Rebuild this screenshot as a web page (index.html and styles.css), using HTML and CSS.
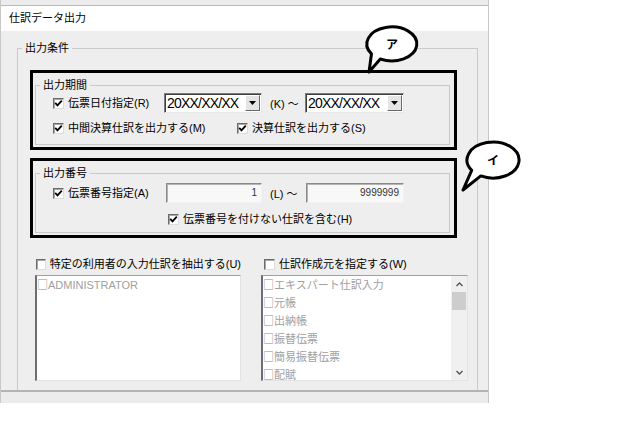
FILE: index.html
```html
<!DOCTYPE html>
<html lang="ja">

<head>
  <meta charset="UTF-8">
  <title>仕訳データ出力</title>
  <link rel="stylesheet" href="styles.css">
</head>

<body>
  <div class="window">
    <div class="frame-top"></div>
    <div class="titlebar">仕訳データ出力</div>

    <div class="client">
      <fieldset class="group outer">
        <legend>出力条件</legend>

        <!-- ア: 出力期間 -->
        <div class="mark">
          <fieldset class="group inner">
            <legend>出力期間</legend>
            <div class="row row-date">
              <label class="check cell-date">
                <span class="box"><svg width="9" height="9" viewBox="0 0 9 9"><path d="M1.2 3.8 L3.5 6.3 L7.8 1.6" fill="none" stroke="#000" stroke-width="1.8"/></svg></span>
                伝票日付指定(R)
              </label>
              <div class="combo">
                <span class="combo-text">20XX/XX/XX</span>
                <span class="combo-btn"><svg width="7" height="4" viewBox="0 0 7 4"><path d="M0 0 H7 L3.5 4 Z" fill="#000"/></svg></span>
              </div>
              <span class="tilde">(K) ～</span>
              <div class="combo wide">
                <span class="combo-text">20XX/XX/XX</span>
                <span class="combo-btn"><svg width="7" height="4" viewBox="0 0 7 4"><path d="M0 0 H7 L3.5 4 Z" fill="#000"/></svg></span>
              </div>
            </div>
            <div class="row row-opts">
              <label class="check cell-mid">
                <span class="box"><svg width="9" height="9" viewBox="0 0 9 9"><path d="M1.2 3.8 L3.5 6.3 L7.8 1.6" fill="none" stroke="#000" stroke-width="1.8"/></svg></span>
                中間決算仕訳を出力する(M)
              </label>
              <label class="check">
                <span class="box"><svg width="9" height="9" viewBox="0 0 9 9"><path d="M1.2 3.8 L3.5 6.3 L7.8 1.6" fill="none" stroke="#000" stroke-width="1.8"/></svg></span>
                決算仕訳を出力する(S)
              </label>
            </div>
          </fieldset>
        </div>

        <!-- イ: 出力番号 -->
        <div class="mark mark-b">
          <fieldset class="group inner">
            <legend>出力番号</legend>
            <div class="row row-num">
              <label class="check cell-num">
                <span class="box"><svg width="9" height="9" viewBox="0 0 9 9"><path d="M1.2 3.8 L3.5 6.3 L7.8 1.6" fill="none" stroke="#000" stroke-width="1.8"/></svg></span>
                伝票番号指定(A)
              </label>
              <div class="field">1</div>
              <span class="tilde num">(L) ～</span>
              <div class="field wide">9999999</div>
            </div>
            <div class="row row-none">
              <label class="check">
                <span class="box"><svg width="9" height="9" viewBox="0 0 9 9"><path d="M1.2 3.8 L3.5 6.3 L7.8 1.6" fill="none" stroke="#000" stroke-width="1.8"/></svg></span>
                伝票番号を付けない仕訳を含む(H)
              </label>
            </div>
          </fieldset>
        </div>

        <!-- 利用者 / 作成元 -->
        <div class="lists">
          <div class="list-col">
            <label class="check"><span class="box"></span>特定の利用者の入力仕訳を抽出する(U)</label>
            <div class="listbox">
              <div class="items">
                <div class="item"><span class="sq">□</span>ADMINISTRATOR</div>
              </div>
            </div>
          </div>
          <div class="list-col right">
            <label class="check"><span class="box"></span>仕訳作成元を指定する(W)</label>
            <div class="listbox">
              <div class="items">
                <div class="item"><span class="sq">□</span>エキスパート仕訳入力</div>
                <div class="item"><span class="sq">□</span>元帳</div>
                <div class="item"><span class="sq">□</span>出納帳</div>
                <div class="item"><span class="sq">□</span>振替伝票</div>
                <div class="item"><span class="sq">□</span>簡易振替伝票</div>
                <div class="item"><span class="sq">□</span>配賦</div>
              </div>
              <div class="scroll">
                <span class="arrow"><svg width="7" height="5" viewBox="0 0 7 5"><path d="M0.5 4 L3.5 1 L6.5 4" fill="none" stroke="#555" stroke-width="1.4"/></svg></span>
                <span class="thumb"></span>
                <span class="track"></span>
                <span class="arrow"><svg width="7" height="5" viewBox="0 0 7 5"><path d="M0.5 1 L3.5 4 L6.5 1" fill="none" stroke="#555" stroke-width="1.4"/></svg></span>
              </div>
            </div>
          </div>
        </div>
      </fieldset>
    </div>

    <div class="foot"></div>
  </div>

  <!-- 吹き出し -->
  <svg class="bubble bubble-a" width="65" height="55" viewBox="0 0 65 55">
    <path d="M11.5 33.8 A25 17 0 1 1 20.3 39 L9 52 Z" fill="#fff" stroke="#000" stroke-width="3" stroke-linejoin="round"/>
    <text x="32" y="29" text-anchor="middle">ア</text>
  </svg>
  <svg class="bubble bubble-i" width="75" height="62" viewBox="0 0 75 62">
    <path d="M16.7 35.3 A26 18 0 1 1 25.8 40.9 L8 55 Z" fill="#fff" stroke="#000" stroke-width="3" stroke-linejoin="round"/>
    <text x="38" y="30" text-anchor="middle">イ</text>
  </svg>
</body>

</html>
```

FILE: styles.css
```css
body {
  margin: 0;
  background: #fff;
  font-family: "Liberation Sans", "Noto Sans CJK JP", sans-serif;
  font-size: 11px;
  color: #000;
}

.window {
  width: 487px;
  border-left: 1px solid #c8c8c8;
  border-right: 1px solid #c8c8c8;
}

.frame-top {
  height: 5px;
  background: #ececec;
  border-bottom: 1px solid #b9b9b9;
}

.titlebar {
  height: 25px;
  line-height: 25px;
  padding-left: 8px;
  background: #fff;
}

.client {
  box-sizing: border-box;
  height: 359px;
  overflow: hidden;
  padding: 10px 0 0 16px;
  background: #eeeeee;
}

.foot {
  height: 11px;
  background: #ececec;
  border-top: 2px solid #b3b3b3;
}

/* group boxes */
.group {
  margin: 0;
  padding: 0;
  min-width: 0;
  border: 1px solid #c9c9c9;
}

.group legend {
  margin-left: 4px;
  padding: 0 3px;
  line-height: 14px;
}

.outer {
  box-sizing: border-box;
  width: 461px;
}

.inner {
  padding-bottom: 9px;
}

.mark {
  margin: 15px 20px 0 12px;
  padding: 5px 4px 2px 2px;
  border: 3px solid #000;
}

.mark-b {
  margin-top: 8px;
}

.mark-b .inner {
  padding-bottom: 6px;
}

/* rows */
.row {
  display: flex;
  align-items: center;
  padding-left: 17px;
}

.row-date {
  height: 20px;
  margin-top: 1px;
}

.row-opts {
  height: 14px;
  margin-top: 8px;
}

.row-num {
  height: 20px;
  margin-top: 3px;
}

.row-none {
  height: 14px;
  margin-top: 9px;
  padding-left: 132px;
}

.check {
  display: flex;
  align-items: center;
  gap: 4px;
  white-space: nowrap;
  line-height: 14px;
}

.box {
  box-sizing: border-box;
  width: 11px;
  height: 11px;
  display: flex;
  align-items: center;
  justify-content: center;
  background: #fff;
  border: 1px solid;
  border-color: #6b6b6b #dcdcdc #dcdcdc #6b6b6b;
  box-shadow: inset 1px 1px 0 #a8a8a8;
}

.cell-date {
  width: 111px;
}

.cell-mid {
  width: 184px;
}

.cell-num {
  width: 113px;
}

.tilde {
  width: 35px;
  margin-left: 8px;
  white-space: nowrap;
}

.tilde.num {
  width: 36px;
}

/* combo + edit fields */
.combo {
  box-sizing: border-box;
  width: 98px;
  height: 20px;
  display: flex;
  align-items: center;
  background: #fff;
  border: 1px solid;
  border-color: #7d7d7d #e8e8e8 #e8e8e8 #7d7d7d;
  box-shadow: inset 1px 1px 0 #3c3c3c;
}

.combo.wide {
  width: 99px;
}

.combo-text {
  flex-grow: 1;
  padding-left: 2px;
  font-size: 14px;
  letter-spacing: -0.8px;
  line-height: 18px;
  white-space: nowrap;
  overflow: hidden;
}

.combo-btn {
  box-sizing: border-box;
  width: 15px;
  height: 16px;
  margin-right: 1px;
  display: flex;
  align-items: center;
  justify-content: center;
  background: #e4e4e4;
  border: 1px solid;
  border-color: #fff #6a6a6a #6a6a6a #fff;
}

.field {
  box-sizing: border-box;
  width: 96px;
  height: 20px;
  padding-right: 4px;
  text-align: right;
  font-size: 10px;
  line-height: 17px;
  color: #333;
  background: #f8f8f8;
  border: 1px solid;
  border-color: #8a8a8a #f2f2f2 #f2f2f2 #8a8a8a;
  box-shadow: inset 1px 1px 0 #b4b4b4;
}

.field.wide {
  width: 98px;
}

/* list boxes */
.lists {
  display: flex;
  gap: 20px;
  margin: 19px 0 0 17px;
  padding-bottom: 30px;
}

.list-col {
  width: 206px;
}

.list-col.right {
  width: 207px;
}

.list-col .check {
  height: 14px;
  margin-left: 1px;
}

.list-col.right .check {
  margin-left: 3px;
}

.listbox {
  box-sizing: border-box;
  height: 106px;
  margin-top: 4px;
  display: flex;
  background: #fff;
  border-left: 2px solid #6e6e6e;
  border-top: 1px solid #a0a0a0;
  border-right: 1px solid #e3e3e3;
  border-bottom: 1px solid #e3e3e3;
}

.items {
  flex-grow: 1;
}

.item {
  line-height: 17px;
  color: #a0a0a0;
  white-space: nowrap;
}

.item .sq {
  font-family: "Noto Sans CJK JP", sans-serif;
  color: #8a8a8a;
}

.scroll {
  width: 16px;
  display: flex;
  flex-direction: column;
  align-items: center;
  background: #f0f0f0;
}

.scroll .arrow {
  height: 16px;
  display: flex;
  align-items: center;
}

.scroll .thumb {
  width: 14px;
  height: 18px;
  background: #cdcdcd;
}

.scroll .track {
  flex-grow: 1;
}

/* annotation bubbles */
.bubble {
  position: absolute;
}

.bubble text {
  font-family: "Noto Sans CJK JP", sans-serif;
  font-size: 12px;
  font-weight: bold;
}

.bubble-a {
  left: 360px;
  top: 20px;
}

.bubble-i {
  left: 455px;
  top: 135px;
}
```
